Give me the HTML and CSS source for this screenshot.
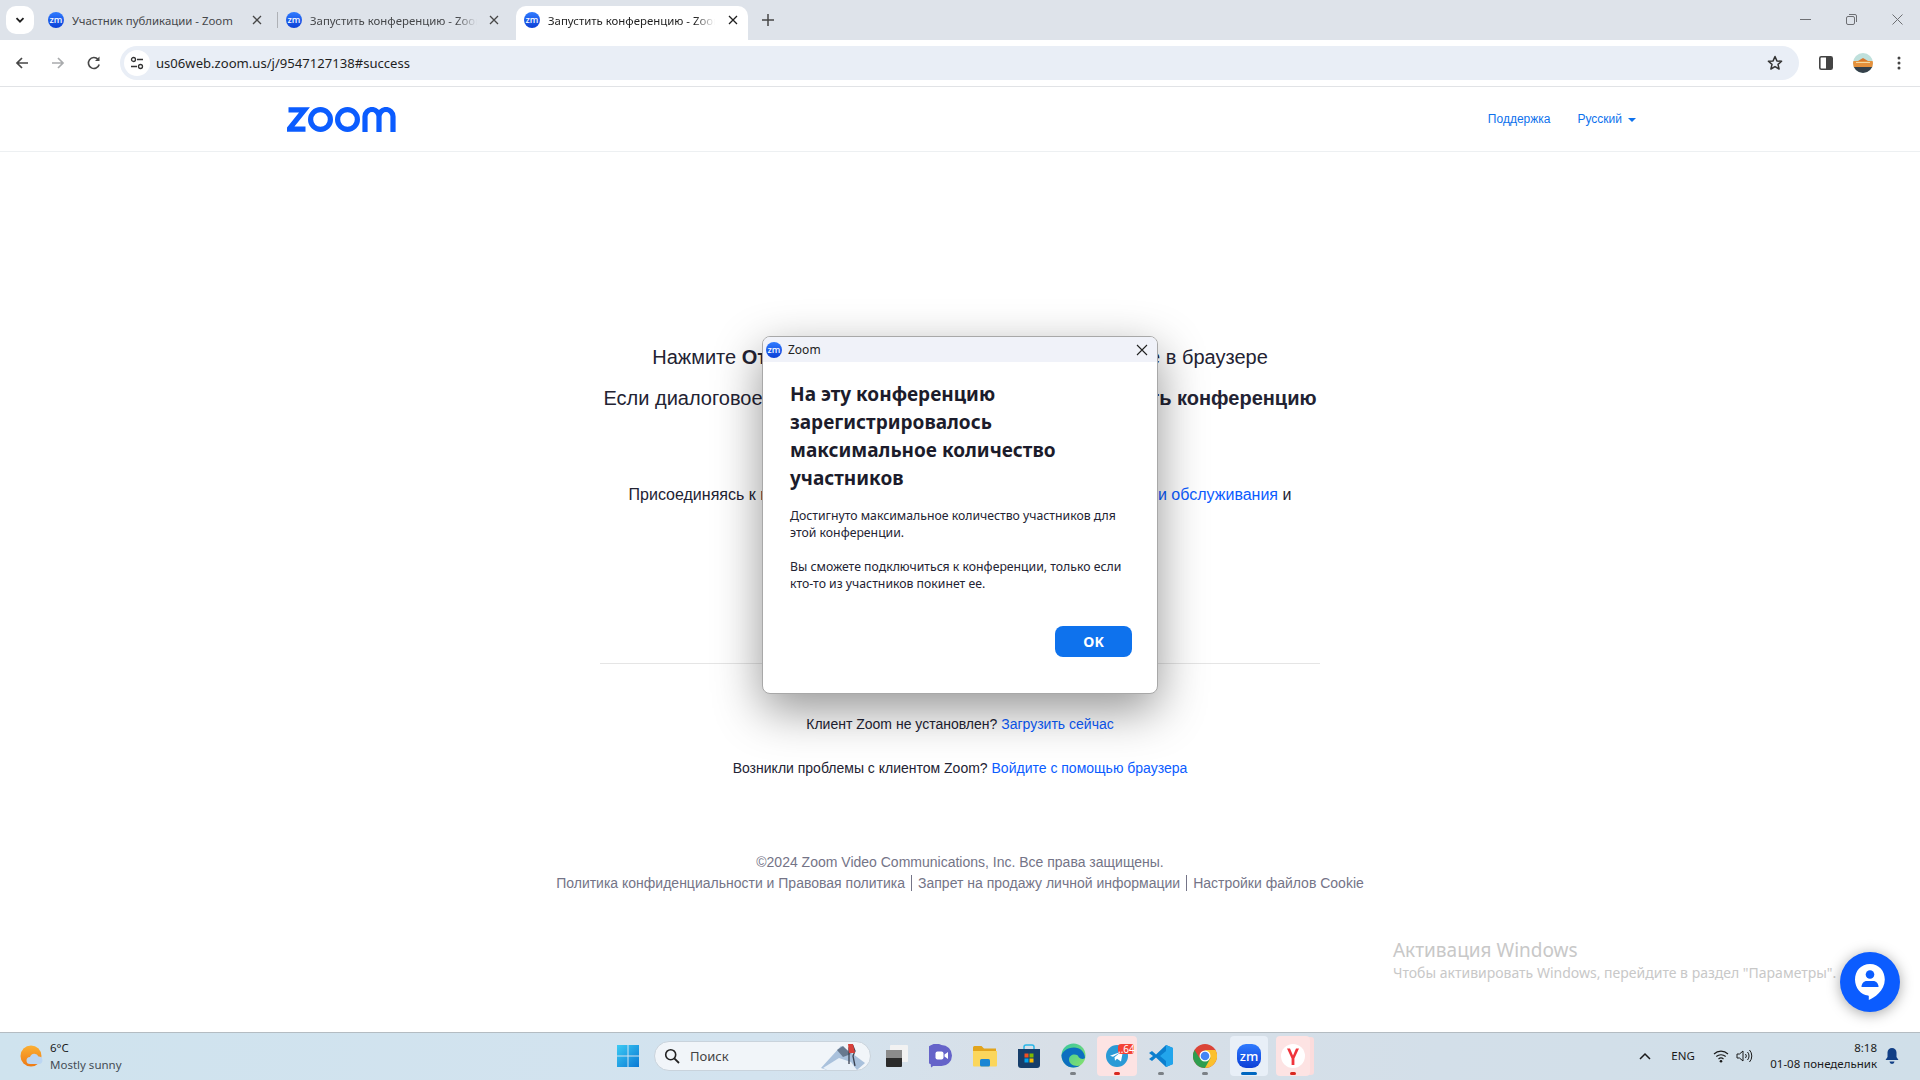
FILE: index.html
```html
<!DOCTYPE html>
<html>
<head>
  <meta charset="UTF-8">
  <title>Запустить конференцию - Zoom</title>
  <link rel="stylesheet" href="styles.css">
</head>
<body>
<div class="screen">

<!-- browser tabs -->
<div class="tabstrip">
  <div class="tab-search"><svg width="12" height="12" viewBox="0 0 12 12"><path d="M2.5 4.2 6 7.7l3.5-3.5" fill="none" stroke="#1f1f1f" stroke-width="1.8"/></svg></div>
  <div class="tab tab-first">
    <span class="zm zm-small">zm</span>
    <span class="tab-title tab-title-full">Участник публикации - Zoom</span>
    <svg class="tab-close" width="10" height="10" viewBox="0 0 10 10"><path d="M1 1l8 8M9 1l-8 8" stroke="#474747" stroke-width="1.3"/></svg>
  </div>
  <div class="tab-sep"></div>
  <div class="tab tab-second">
    <span class="zm zm-small">zm</span>
    <span class="tab-title">Запустить конференцию - Zoom</span>
    <svg class="tab-close" width="10" height="10" viewBox="0 0 10 10"><path d="M1 1l8 8M9 1l-8 8" stroke="#474747" stroke-width="1.3"/></svg>
  </div>
  <div class="tab tab-active">
    <span class="zm zm-small">zm</span>
    <span class="tab-title">Запустить конференцию - Zoom</span>
    <svg class="tab-close" width="10" height="10" viewBox="0 0 10 10"><path d="M1 1l8 8M9 1l-8 8" stroke="#1f1f1f" stroke-width="1.3"/></svg>
  </div>
  <svg class="tab-new" width="12" height="12" viewBox="0 0 12 12"><path d="M6 0v12M0 6h12" stroke="#474747" stroke-width="1.5"/></svg>
  <div class="win-controls">
    <svg width="11" height="11" viewBox="0 0 11 11"><path d="M0 5.5h11" stroke="#6d6f73"/></svg>
    <svg width="11" height="11" viewBox="0 0 11 11"><rect x=".5" y="2.5" width="8" height="8" rx="1.5" fill="none" stroke="#6d6f73"/><path d="M3 .5h6a1.5 1.5 0 0 1 1.5 1.5v6" fill="none" stroke="#6d6f73"/></svg>
    <svg width="11" height="11" viewBox="0 0 11 11"><path d="M.5.5l10 10M10.500.5l-10 10" stroke="#6d6f73"/></svg>
  </div>
</div>

<!-- address bar -->
<div class="toolbar">
  <svg class="nav-btn" width="16" height="16" viewBox="0 0 16 16"><path d="M14 8H3M8 3 3 8l5 5" fill="none" stroke="#474747" stroke-width="1.7"/></svg>
  <svg class="nav-btn" width="16" height="16" viewBox="0 0 16 16"><path d="M2 8h11M8 3l5 5-5 5" fill="none" stroke="#a9abad" stroke-width="1.7"/></svg>
  <svg class="nav-btn" width="16" height="16" viewBox="0 0 16 16"><path d="M13.200 9.500A5.500 5.500 0 1 1 12 4.300" fill="none" stroke="#474747" stroke-width="1.6"/><path d="M13.500 1.500v4.500H9z" fill="#474747"/></svg>
  <div class="omnibox">
    <div class="site-info"><svg width="14" height="14" viewBox="0 0 14 14"><circle cx="3.500" cy="3.500" r="2" fill="none" stroke="#333" stroke-width="1.300"/><path d="M7 3.500h6M1 10.500h6" stroke="#333" stroke-width="1.300"/><circle cx="10.500" cy="10.500" r="2" fill="none" stroke="#333" stroke-width="1.300"/></svg></div>
    <span class="url">us06web.zoom.us/j/9547127138#success</span>
    <svg class="star" width="16" height="16" viewBox="0 0 16 16"><path d="M8 1.500 9.900 5.900l4.700.4-3.600 3.100 1.100 4.600L8 11.600 3.900 14l1.100-4.600L1.400 6.300l4.700-.4z" fill="none" stroke="#333" stroke-width="1.500" stroke-linejoin="round"/></svg>
  </div>
  <div class="toolbar-right">
    <svg width="14" height="14" viewBox="0 0 14 14"><rect x=".8" y=".8" width="12.400" height="12.400" rx="1.500" fill="#fff" stroke="#444" stroke-width="1.600"/><rect x="7" y="1" width="6" height="12" fill="#444"/></svg>
    <svg width="20" height="20" viewBox="0 0 20 20"><defs><clipPath id="ava"><circle cx="10" cy="10" r="10"/></clipPath></defs><g clip-path="url(#ava)"><rect width="20" height="20" fill="#bfe0dc"/><rect y="8" width="20" height="6" fill="#e5913c"/><path d="M5 8l5-3 5 3z" fill="#d9762b"/><rect x="3" y="9" width="14" height="1" fill="#f5d9a0"/><rect y="14" width="20" height="6" fill="#35404a"/></g></svg>
    <svg class="more" width="4" height="14" viewBox="0 0 4 14"><circle cx="2" cy="2" r="1.500" fill="#444"/><circle cx="2" cy="7" r="1.500" fill="#444"/><circle cx="2" cy="12" r="1.500" fill="#444"/></svg>
  </div>
</div>

<!-- zoom page -->
<div class="page">
  <header class="site-header">
    <svg class="logo" width="109" height="25" viewBox="0 0 109 25"><g fill="none" stroke="#0b5cff" stroke-width="5.200"><path d="M1.500 2.900H17.500L2 22.100H18.500"/><circle cx="33.500" cy="12.500" r="9.900"/><circle cx="60.500" cy="12.500" r="9.900"/><path d="M78 25V9.500a7 7 0 0 1 14 0V25M92 9.500a7 7 0 0 1 14 0V25"/></g></svg>
    <nav class="site-nav">
      <a class="site-link">Поддержка</a>
      <a class="site-link lang">Русский<span class="caret"></span></a>
    </nav>
  </header>

  <main class="launch">
    <p class="launch-line">Нажмите <b>Открыть Zoom Meetings</b> в диалоговом окне в браузере</p>
    <p class="launch-line">Если диалоговое окно не отображается, нажмите <b>Запустить конференцию</b></p>
    <p class="terms">Присоединяясь к встрече, вы выражаете согласие с нашими <a class="link">Условиями обслуживания</a> и<br><a class="link">Заявлением о конфиденциальности</a></p>
    <hr class="divider">
    <p class="help first">Клиент Zoom не установлен? <a class="link">Загрузить сейчас</a></p>
    <p class="help">Возникли проблемы с клиентом Zoom? <a class="link">Войдите с помощью браузера</a></p>
    <footer class="site-footer">
      <div>©2024 Zoom Video Communications, Inc. Все права защищены.</div>
      <div class="footer-links"><span>Политика конфиденциальности и Правовая политика</span><span>Запрет на продажу личной информации</span><span>Настройки файлов Cookie</span></div>
    </footer>
  </main>

  <div class="watermark">
    <div class="wm-title">Активация Windows</div>
    <div>Чтобы активировать Windows, перейдите в раздел "Параметры".</div>
  </div>

  <div class="chat-bubble">
    <svg width="34" height="38" viewBox="0 0 34 38"><path d="M17 1C8 1 2 8 2 16.500S8 32 15 32.500c.5 0 .8.3.8.8V37c5-2 16-9 16-20.500C31.800 8 26 1 17 1z" fill="#fff"/><circle cx="17" cy="11.500" r="4.300" fill="#0b5cff"/><path d="M8.500 24c0-4 3-6 5-6h7c2 0 5 2 5 6z" fill="#0b5cff"/></svg>
  </div>
</div>

<!-- windows taskbar -->
<div class="taskbar">
  <div class="weather">
    <svg width="24" height="24" viewBox="0 0 24 24"><defs><linearGradient id="sun" x1="0" y1="0" x2="0" y2="1"><stop offset="0" stop-color="#fbb034"/><stop offset="1" stop-color="#ee7a14"/></linearGradient></defs><circle cx="11" cy="12" r="10.500" fill="url(#sun)"/><path d="M10 20a3.500 3.500 0 0 1 0-7 4.500 4.500 0 0 1 8.500-.5 3.800 3.800 0 0 1 1 7.500z" fill="#bcd6f2"/></svg>
    <div class="weather-text">
      <div>6°C</div>
      <div class="weather-sub">Mostly sunny</div>
    </div>
  </div>
  <div class="slot">
    <svg width="24" height="24" viewBox="0 0 24 24"><defs><linearGradient id="win" x1="0" y1="0" x2="1" y2="1"><stop offset="0" stop-color="#3ccbf4"/><stop offset="1" stop-color="#0a78d4"/></linearGradient></defs><path d="M1 1h10.500v10.500H1zM12.500 1H23v10.500H12.500zM1 12.500h10.500V23H1zM12.500 12.500H23V23H12.500z" fill="url(#win)"/></svg>
  </div>
  <div class="search">
    <svg width="16" height="16" viewBox="0 0 16 16"><circle cx="6.700" cy="6.700" r="5" fill="none" stroke="#222" stroke-width="1.600"/><path d="M10.300 10.300 15 15" stroke="#222" stroke-width="1.800"/></svg>
    <span class="search-label">Поиск</span>
    <svg class="search-art" width="50" height="28" viewBox="0 0 50 28"><path d="M2 26 22 4l8 5 16 12-8 7H8z" fill="#a9c1dc"/><path d="M4 26l16-10 12 4 6 8H8z" fill="#e8f0f8"/><path d="M18 8l6-4 8 8-8 3z" fill="#67798f"/><path d="M30 22V6l4-2 2 5-2 5 2 10" fill="none" stroke="#3a4150" stroke-width="1.300"/><path d="M29 2h5l2 9h-6z" fill="#d8403a"/></svg>
  </div>
  <div class="slot">
    <svg width="24" height="24" viewBox="0 0 24 24"><rect x="5" y="1" width="18" height="17" rx="1" fill="#f2f2f2"/><rect x="1" y="6" width="16" height="17" rx="1" fill="#2b2b2b"/><rect x="1" y="6" width="16" height="8" fill="#8b8b8b"/></svg>
  </div>
  <div class="slot">
    <svg width="24" height="24" viewBox="0 0 24 24"><path d="M12.500 1a10.500 10.500 0 0 1 0 21H4l-1.500 1.500c-.6-.4-1-1.500-.5-3A10.500 10.500 0 0 1 12.500 1z" fill="#6563c9"/><rect x="6.500" y="7.500" width="8" height="8" rx="2" fill="#fff"/><path d="M15.500 10.500 19 8v7l-3.500-2.500z" fill="#fff"/></svg>
  </div>
  <div class="slot">
    <svg width="24" height="24" viewBox="0 0 24 24"><path d="M0 3.500A1.500 1.500 0 0 1 1.500 2h7l2.500 2.500H23V9H0z" fill="#e2a41c"/><path d="M0 7h24v14.500a1 1 0 0 1-1 1H1a1 1 0 0 1-1-1z" fill="#fbd65c"/><rect x="7" y="15" width="10" height="7.500" rx="1.500" fill="#1a86d4"/></svg>
  </div>
  <div class="slot">
    <svg width="24" height="24" viewBox="0 0 24 24"><path d="M7 6V3a2 2 0 0 1 2-2h6a2 2 0 0 1 2 2v3" fill="none" stroke="#28b6e8" stroke-width="1.500"/><path d="M1 5h22v16a3 3 0 0 1-3 3H4a3 3 0 0 1-3-3z" fill="#163e6b"/><rect x="7.500" y="9.500" width="4" height="4" fill="#f25022"/><rect x="12.500" y="9.500" width="4" height="4" fill="#7fba00"/><rect x="7.500" y="14.500" width="4" height="4" fill="#00a4ef"/><rect x="12.500" y="14.500" width="4" height="4" fill="#ffb900"/></svg>
  </div>
  <div class="slot running">
    <svg width="25" height="25" viewBox="0 0 25 25"><defs><linearGradient id="edge" x1="0" y1="0" x2="1" y2="1"><stop offset="0" stop-color="#36c5a0"/><stop offset="1" stop-color="#8be36a"/></linearGradient></defs><circle cx="12.500" cy="12.500" r="12" fill="url(#edge)"/><path d="M24 14.500c-.5-6-5-10-11-10C6 4.500 1 9 .5 12.500 1 20 6 24.500 12.500 24.500c2.500 0 5-1 6.500-2-5 1.500-11-1-11-6 0-3 2.500-5 5.500-5 2.500 0 4 1 4 2.500 2 2.500 6.500 2.500 6.500.5z" fill="#0c6fc0"/></svg>
  </div>
  <div class="slot running tile-alert tile-telegram">
    <svg width="22" height="22" viewBox="0 0 22 22"><circle cx="11" cy="11" r="11" fill="#2c9ad6"/><path d="M4 10.800 17 6l-2 10.500-4-2.800-2 2-.5-3.500 6-5-7.500 4.500z" fill="#fff"/></svg>
    <span class="tile-badge">..64</span>
  </div>
  <div class="slot running">
    <svg width="24" height="24" viewBox="0 0 24 24"><path d="M17 1 24 4v16l-7 3L7 13.500 3 17 0 15l4-3-4-3 3-2 4 3.500z" fill="#0b7fcf"/><path d="M17 1 24 4v16l-7 3zM17 7l-6 5 6 5z" fill="#22a5ec" fill-rule="evenodd"/></svg>
  </div>
  <div class="slot running">
    <svg width="24" height="24" viewBox="0 0 24 24"><circle cx="12" cy="12" r="12" fill="#db4437"/><path d="M12 24A12 12 0 0 0 22.400 6H12z" fill="#fbc02d"/><path d="M12 24 17.500 14 12 6 6.500 14 1.600 6A12 12 0 0 0 12 24z" fill="#2e9e4f"/><circle cx="12" cy="12" r="5.500" fill="#fff"/><circle cx="12" cy="12" r="4.300" fill="#4285f4"/></svg>
  </div>
  <div class="slot running tile-active">
    <span class="zm zm-large">zm</span>
  </div>
  <div class="slot running tile-alert tile-stack">
    <svg width="24" height="24" viewBox="0 0 24 24"><circle cx="12" cy="12" r="12" fill="#fff"/><path d="M6 4.500h3l3 7 3-7h3l-4.600 10V21h-2.800v-6.500z" fill="#f0343c"/></svg>
  </div>

  <div class="tray">
    <svg width="12" height="8" viewBox="0 0 12 8"><path d="M1 7l5-5 5 5" fill="none" stroke="#1a1a1a" stroke-width="1.500"/></svg>
    <span class="tray-lang">ENG</span>
    <svg width="16" height="14" viewBox="0 0 16 14"><path d="M1 5a10 10 0 0 1 14 0M3.300 7.500a7 7 0 0 1 9.400 0M5.500 10a3.800 3.800 0 0 1 5 0" fill="none" stroke="#1a1a1a" stroke-width="1.100"/><circle cx="8" cy="12.300" r="1.300" fill="#1a1a1a"/></svg>
    <svg width="17" height="14" viewBox="0 0 17 14"><path d="M1 5h2.500L7 2v10L3.500 9H1z" fill="none" stroke="#1a1a1a"/><path d="M9.500 5a3 3 0 0 1 0 4M11.500 3a6 6 0 0 1 0 8M13.500 1a9 9 0 0 1 0 12" fill="none" stroke="#1a1a1a"/></svg>
    <div class="clock">
      <div>8:18</div>
      <div>01-08 понедельник</div>
    </div>
    <svg width="14" height="16" viewBox="0 0 14 16"><path d="M7 0a4.500 4.500 0 0 1 4.500 4.500V9l2 3H.5l2-3V4.500A4.500 4.500 0 0 1 7 0z" fill="#123f86"/><path d="M4.500 13.500h5a2.500 2.500 0 0 1-5 0z" fill="#123f86"/></svg>
  </div>
</div>

<!-- zoom desktop dialog -->
<div class="dialog">
  <div class="dialog-bar">
    <span class="zm zm-small">zm</span>
    <span class="dialog-app">Zoom</span>
    <svg class="dialog-close" width="12" height="12" viewBox="0 0 12 12"><path d="M1 1l10 10M11 1 1 11" stroke="#222" stroke-width="1.100"/></svg>
  </div>
  <div class="dialog-body">
    <h2 class="dialog-title">На эту конференцию зарегистрировалось максимальное количество участников</h2>
    <p class="dialog-text">Достигнуто максимальное количество участников для этой конференции.</p>
    <p class="dialog-text">Вы сможете подключиться к конференции, только если кто-то из участников покинет ее.</p>
    <div class="dialog-actions"><button class="ok-btn">OK</button></div>
  </div>
</div>

</div>
</body>
</html>
```

FILE: styles.css
```css
* { box-sizing: border-box; }

html, body {
    margin: 0;
    height: 100%;
}

body {
    background: #fff;
    color: #232333;
    font-family: "Liberation Sans", Arial, sans-serif;
    overflow: hidden;
}

.screen {
    position: relative;
    width: 1920px;
    height: 1080px;
    display: flex;
    flex-direction: column;
    overflow: hidden;
}

/* favicon used in tabs, dialog and taskbar */
.zm {
    display: inline-flex;
    align-items: center;
    justify-content: center;
    flex: none;
    background: linear-gradient(#2f7bff, #0b3fd6);
    color: #fff;
    font-family: "Noto Sans", sans-serif;
    font-weight: 500;
}
.zm-small {
    width: 16px;
    height: 16px;
    border-radius: 50%;
    font-size: 9px;
    line-height: 16px;
}
.zm-large {
    width: 24px;
    height: 24px;
    border-radius: 9px;
    font-size: 13px;
}

/* tabs */
.tabstrip {
    height: 40px;
    flex: none;
    background: #dee3ea;
    display: flex;
    align-items: flex-start;
    padding: 6px 0 0 6px;
    font-family: "Noto Sans", sans-serif;
    font-size: 11.4px;
}
.tab-search {
    width: 28px;
    height: 28px;
    background: #fff;
    border-radius: 10px;
    display: flex;
    align-items: center;
    justify-content: center;
    margin-right: 6px;
}
.tab {
    width: 235px;
    height: 34px;
    display: flex;
    align-items: center;
    padding: 0 10px 6px 8px;
    color: #45474a;
}
.tab-first {
    width: 237px;
    padding-right: 15px;
}
.tab-second {
    width: 238px;
    padding-right: 17px;
}
.tab-active {
    width: 232px;
    background: #fff;
    color: #1f1f1f;
    border-radius: 10px 10px 0 0;
}
.tab-title {
    margin-left: 8px;
    width: 167px;
    white-space: nowrap;
    overflow: hidden;
    -webkit-mask-image: linear-gradient(90deg, #000 88%, transparent);
    mask-image: linear-gradient(90deg, #000 88%, transparent);
}
.tab-title-full {
    -webkit-mask-image: none;
    mask-image: none;
}
.tab-close { margin-left: auto; flex: none; }
.tab-sep {
    width: 1px;
    height: 16px;
    margin-top: 6px;
    background: #aeb1b6;
}
.tab-new { margin: 8px 0 0 14px; }
.win-controls {
    margin-left: auto;
    margin-top: 8px;
    display: flex;
    gap: 35px;
    padding-right: 17px;
}

/* address bar */
.toolbar {
    height: 47px;
    flex: none;
    background: #fff;
    border-bottom: 1px solid #e1e3e6;
    border-radius: 10px 10px 0 0;
    display: flex;
    align-items: center;
    padding: 0 0 1px 14px;
    gap: 20px;
}
.nav-btn { flex: none; }
.omnibox {
    width: 1679px;
    height: 34px;
    margin-left: -2px;
    background: #e9eef6;
    border-radius: 17px;
    display: flex;
    align-items: center;
    padding: 0 16px 0 4px;
    font-family: "Noto Sans", sans-serif;
    font-size: 13.1px;
    color: #1f1f1f;
}
.site-info {
    width: 26px;
    height: 26px;
    border-radius: 50%;
    background: #fff;
    display: flex;
    align-items: center;
    justify-content: center;
}
.url { margin-left: 6px; }
.star { margin-left: auto; }
.toolbar-right {
    display: flex;
    align-items: center;
    gap: 20px;
    margin-left: 0;
}
.more { margin-left: 4px; }

/* zoom page */
.page {
    position: relative;
    flex: 1;
    min-height: 0;
}
.site-header {
    height: 65px;
    border-bottom: 1px solid #edf0f2;
    display: flex;
    align-items: center;
    padding: 0 284px 0 287px;
}
.site-nav {
    margin-left: auto;
    display: flex;
    gap: 27px;
    font-size: 12px;
    color: #0e72ed;
}
.site-link { color: #0e72ed; }
.caret {
    display: inline-block;
    margin-left: 6px;
    vertical-align: middle;
    border-top: 4px solid #0e72ed;
    border-left: 4px solid transparent;
    border-right: 4px solid transparent;
}
.link { color: #0b5cff; }

.launch {
    text-align: center;
    padding-top: 194px;
}
.launch-line {
    margin: 0 0 18px;
    font-size: 20px;
    line-height: 23px;
}
.terms {
    margin: 73px 0 0;
    font-size: 16px;
    line-height: 24px;
    height: 180px;
}
.divider {
    width: 720px;
    margin: 0 auto;
    border: 0;
    border-top: 1px solid #e5e5e5;
}
.help {
    margin: 0;
    font-size: 14px;
    line-height: 16px;
    margin-top: 28px;
}
.help.first { margin-top: 52px; }
.site-footer {
    margin-top: 76px;
    font-size: 14px;
    line-height: 21px;
    color: #747487;
}
.footer-links span + span {
    border-left: 1px solid #747487;
    margin-left: 6px;
    padding-left: 6px;
}

.watermark {
    position: absolute;
    left: 1393px;
    top: 850px;
    color: #c8c8c8;
    font-family: "Noto Sans", sans-serif;
    font-size: 14px;
    line-height: 18px;
    white-space: nowrap;
}
.wm-title {
    font-size: 19px;
    line-height: 27px;
}
.chat-bubble {
    position: absolute;
    left: 1840px;
    top: 865px;
    width: 60px;
    height: 60px;
    border-radius: 50%;
    background: #0b5cff;
    box-shadow: 0 2px 14px rgba(0,0,0,.35);
    display: flex;
    align-items: center;
    justify-content: center;
}

/* taskbar */
.taskbar {
    height: 48px;
    flex: none;
    border-top: 1px solid #b4bcc2;
    background: linear-gradient(90deg, #cfe3ee, #d3e3ef 40%, #d8dfe7 55%, #d3dfe9 75%, #d0dfe9);
    display: flex;
    align-items: center;
    padding-bottom: 2px;
    font-family: "Noto Sans", sans-serif;
    font-size: 11.5px;
    color: #1a1a1a;
}
.weather {
    width: 606px;
    display: flex;
    align-items: center;
    padding-left: 20px;
    gap: 6px;
}
.weather-text { line-height: 17px; }
.weather-sub { color: #444c55; }
.slot {
    position: relative;
    width: 44px;
    height: 40px;
    flex: none;
    display: flex;
    align-items: center;
    justify-content: center;
    border-radius: 4px;
}
.running::after {
    content: "";
    position: absolute;
    bottom: 1px;
    left: 19px;
    width: 6px;
    height: 3px;
    border-radius: 2px;
    background: #7b8085;
}
.tile-alert { background: #fde3e3; }
.tile-alert::after { background: #d9271f; }
.tile-telegram {
    width: 40px;
    margin: 0 2px;
}
.tile-telegram::after { left: 17px; }
.tile-active {
    background: #e8eff7;
    width: 38px;
    margin: 0 3px;
}
.tile-active::after {
    left: 11px;
    width: 16px;
    background: #0067c0;
}
.tile-stack {
    width: 34px;
    margin: 0 5px;
    box-shadow: 5px 0 0 -1px #fbdcdc;
}
.tile-stack::after { left: 14px; }
.tile-badge {
    position: absolute;
    top: 8px;
    left: 21px;
    width: 16px;
    height: 10px;
    background: #f44336;
    color: #fff;
    border-radius: 3px;
    font-size: 10px;
    line-height: 10px;
    text-align: center;
}
.search {
    width: 217px;
    height: 30px;
    flex: none;
    margin: 0 4px;
    padding: 0 1px 0 9px;
    border-radius: 15px;
    background: #f1f5f9;
    border: 1px solid #c9d3dc;
    display: flex;
    align-items: center;
    font-size: 13px;
    color: #444;
}
.search-label { margin-left: 10px; }
.search-art { margin-left: auto; }
.tray {
    margin-left: auto;
    display: flex;
    align-items: center;
    padding-right: 21px;
}
.tray-lang { margin-left: 20px; width: 42px; }
.tray svg + svg { margin-left: 7px; }
.clock {
    margin: 0 8px 0 17px;
    text-align: right;
    line-height: 16px;
}

/* dialog */
.dialog {
    position: absolute;
    left: 762px;
    top: 336px;
    width: 396px;
    height: 358px;
    background: #fff;
    border: 1px solid #a8a8a8;
    border-radius: 8px;
    box-shadow: 0 16px 48px rgba(0,0,0,.42);
    font-family: "Noto Sans", sans-serif;
    overflow: hidden;
}
.dialog-bar {
    height: 25px;
    background: #f0f2f9;
    display: flex;
    align-items: center;
    padding: 0 8px 0 3px;
}
.dialog-app {
    margin-left: 6px;
    font-size: 12px;
    color: #222;
}
.dialog-close { margin-left: auto; margin-right: 1px; }
.dialog-body { padding: 18px 25px 0 27px; }
.dialog-title {
    margin: 0 0 15px;
    font-size: 19px;
    line-height: 28px;
    font-weight: 700;
    color: #1c1c2b;
    width: 300px;
}
.dialog-text {
    margin: 0 0 17px;
    font-size: 12.25px;
    line-height: 17px;
    color: #232333;
}
.dialog-actions {
    display: flex;
    justify-content: flex-end;
    margin-top: 34px;
}
.ok-btn {
    width: 77px;
    height: 31px;
    border: 0;
    border-radius: 8px;
    background: #0e72ed;
    color: #fff;
    font-family: "Noto Sans", sans-serif;
    font-size: 14px;
    font-weight: 700;
}
```
